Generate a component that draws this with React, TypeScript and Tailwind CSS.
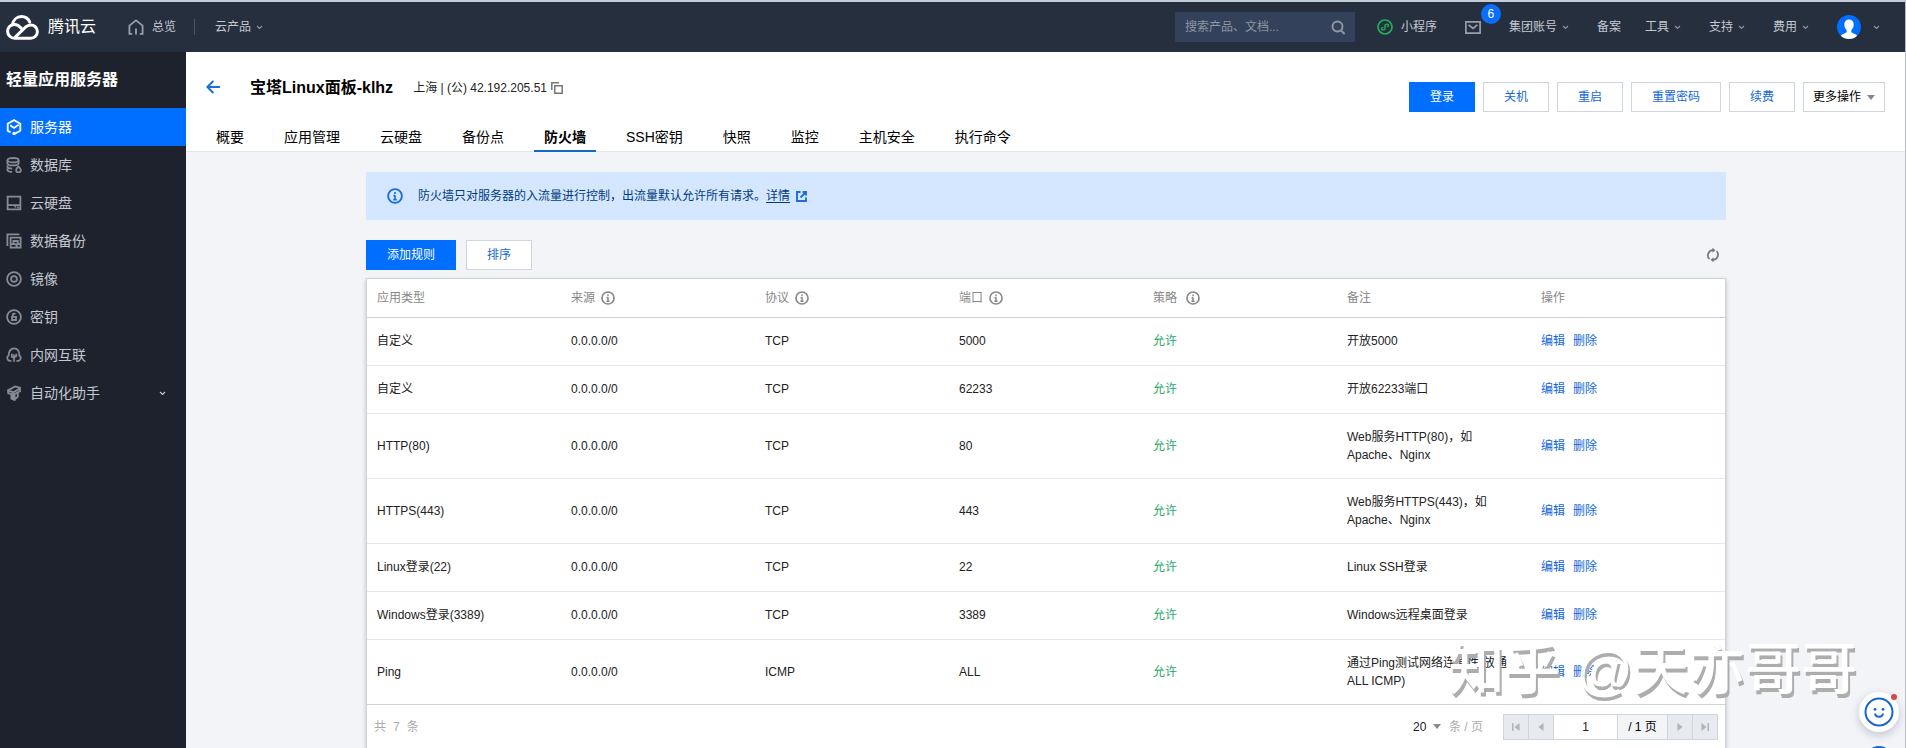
import React, { useState } from 'react';

type IconProps = { className?: string };

const Chevron = ({ className = '' }: IconProps) => (
  <svg viewBox="0 0 7 5" className={'w-[7px] h-[5px] shrink-0 ' + className} fill="none" stroke="currentColor" strokeWidth="1.2">
    <path d="M1 1l2.5 2.4L6 1" />
  </svg>
);

const Caret = ({ className = '' }: IconProps) => (
  <svg viewBox="0 0 8 5" className={'w-2 h-[5px] shrink-0 ' + className} fill="#888">
    <path d="M0 0h8L4 5z" />
  </svg>
);

const InfoIcon = ({ className = '' }: IconProps) => (
  <svg viewBox="0 0 16 16" className={'shrink-0 ' + className} fill="none" stroke="currentColor">
    <circle cx="8" cy="8" r="6.9" strokeWidth="1.9" />
    <path d="M8 4v2M8 7.2V12M6.4 7.7H8M6.2 11.6h3.6" strokeWidth="1.7" />
  </svg>
);

const Logo = () => (
  <svg viewBox="0 0 33 25" className="w-[33px] h-[25px]" fill="none" stroke="#fff" strokeWidth="3" strokeLinecap="round" strokeLinejoin="round">
    <path d="M6.6 9.3C7.4 4.8 11 1.6 15.4 1.6c3.8 0 6.9 2.2 8.3 5.5" />
    <path d="M15.2 13.2C13.2 10.7 11 9.3 8.2 9.4 4.4 9.5 1.6 12.7 1.6 16.3c0 3.9 3.2 6.9 7 6.9h16.2c3.7 0 6.6-3 6.6-6.6 0-3.8-3-6.7-6.7-6.7-2.3 0-3.8.9-5.2 2.2L9.5 21.8" />
  </svg>
);

const icons: Record<string, React.ReactNode> = {
  server: (
    <>
      <path d="M4.600 13.400L1.700 11.700V4.700L8 1.100l6.300 3.600v7L8 15.100" />
      <path d="M4.200 6.300L8 8.900l4.600-3.200" />
      <circle cx="8" cy="14.500" r=".8" />
    </>
  ),
  database: (
    <>
      <ellipse cx="7" cy="3.200" rx="5.600" ry="2.200" />
      <path d="M1.400 3.200v3c0 1.200 2.500 2.200 5.600 2.200s5.600-1 5.600-2.200v-3M1.400 8.500v1c0 1.200 1.800 2 4.800 2.100M1.400 11.500v1.200c0 1.200 1.800 2.100 4.800 2.200" />
      <path d="M12.400 9.500c1.500 1.500 2.500 2.400 2.500 3.500a2.300 2.300 0 0 1-4.800 0c0-1.100.9-2 2.300-3.500z" />
    </>
  ),
  disk: (
    <>
      <path d="M1.600 1.600h12.800v12.800H1.600zM1.600 10.200h12.800" />
      <path d="M9.400 10.200v2.400M11.200 12.400h1.600" />
    </>
  ),
  backup: (
    <>
      <path d="M1.400 13V1.400h12" />
      <path d="M4.600 4.600h10v10h-10zM4.600 11.200h10M7.400 11V8h4.400v3M9.500 12.900h2.200" />
    </>
  ),
  image: (
    <>
      <circle cx="8" cy="8" r="6.900" />
      <circle cx="8" cy="8" r="2.900" />
    </>
  ),
  key: (
    <>
      <circle cx="8" cy="8" r="6.900" />
      <path d="M6.800 7.200V5.400a1.300 1.300 0 0 1 2.400 0M6 7.800h4v3.200H6z" />
    </>
  ),
  network: (
    <>
      <path d="M5.400 13.900H3.800a2.900 2.900 0 0 1-1.200-5.300C2.600 4.400 4.600 1.300 8 1.300s5.400 3.100 5.400 7.300a2.900 2.900 0 0 1-1.200 5.300h-1.800" />
      <path d="M8 14.800V7.400M5.900 6.800v3l2 .9M10.200 6.800v2.400l-2 1" />
    </>
  ),
  robot: (
    <>
      <path d="M2 5.400l7-3.900 5 1.300v3.400L7.600 9.600 2.200 8.200z" />
      <path d="M2.600 5.800l4.800 1.400 6.400-3.600M5.400 9.400v4.200l3.200 1.400V9.400M8.600 14.600l3.200-3V7.800M7.200 7.400v6" />
    </>
  )
};

const menu = [
  { key: 'server', label: '服务器' },
  { key: 'database', label: '数据库' },
  { key: 'disk', label: '云硬盘' },
  { key: 'backup', label: '数据备份' },
  { key: 'image', label: '镜像' },
  { key: 'key', label: '密钥' },
  { key: 'network', label: '内网互联' },
  { key: 'robot', label: '自动化助手', more: true }
];

const tabs = ['概要', '应用管理', '云硬盘', '备份点', '防火墙', 'SSH密钥', '快照', '监控', '主机安全', '执行命令'];

const columns = [
  { label: '应用类型' },
  { label: '来源', info: true },
  { label: '协议', info: true },
  { label: '端口', info: true },
  { label: '策略 ', info: true },
  { label: '备注' },
  { label: '操作' }
];

const rules = [
  { type: '自定义', protocol: 'TCP', port: '5000', remark: '开放5000' },
  { type: '自定义', protocol: 'TCP', port: '62233', remark: '开放62233端口' },
  { type: 'HTTP(80)', protocol: 'TCP', port: '80', remark: 'Web服务HTTP(80)\uff0c如\nApache、Nginx', tall: true },
  { type: 'HTTPS(443)', protocol: 'TCP', port: '443', remark: 'Web服务HTTPS(443)\uff0c如\nApache、Nginx', tall: true },
  { type: 'Linux登录(22)', protocol: 'TCP', port: '22', remark: 'Linux SSH登录' },
  { type: 'Windows登录(3389)', protocol: 'TCP', port: '3389', remark: 'Windows远程桌面登录' },
  { type: 'Ping', protocol: 'ICMP', port: 'ALL', remark: '通过Ping测试网络连通性(放通\nALL ICMP)', tall: true }
];

const TopBar = () => (
  <header className="flex items-center h-[52px] border-t-2 border-[#c3cdd8] bg-[#262f3e] text-[12px] text-[#c4c9d1]">
    <a href="#" className="flex items-center ml-1.5 text-white" aria-label="腾讯云">
      <Logo />
      <span className="ml-[9px] text-[16px]">腾讯云</span>
    </a>
    <a href="#" className="flex items-center gap-2 ml-8">
      <svg viewBox="0 0 16 16" className="w-4 h-4" fill="none" stroke="#98a0ab" strokeWidth="1.8">
        <path d="M4.200 14.800H1.400V6.600L8 1.400l6.600 5.200v8.200h-2.800M8 9.400v6" />
      </svg>
      总览
    </a>
    <span className="w-px h-4 ml-[18px] bg-[#4b5462]"></span>
    <button className="flex items-center gap-[5px] ml-5">
      云产品
      <Chevron className="text-[#8b93a0]" />
    </button>
    <div className="flex items-center ml-auto mr-[26px]">
      <form className="flex items-center w-[180px] h-[30px] pl-2.5 pr-[9px] bg-[#34415a]" onSubmit={e => e.preventDefault()}>
        <input type="text" aria-label="搜索" placeholder="搜索产品、文档..." className="flex-1 min-w-0 bg-transparent outline-none placeholder:text-[#8e96a3]" />
        <button type="submit" aria-label="搜索">
          <svg viewBox="0 0 15 15" className="w-[15px] h-[15px]" fill="none" stroke="#9299a5" strokeWidth="1.9">
            <circle cx="6.500" cy="6.500" r="5" />
            <path d="M10 10.300l3.600 3.700" />
          </svg>
        </button>
      </form>
      <a href="#" className="flex items-center gap-2 ml-[22px]">
        <svg viewBox="0 0 16 16" className="w-4 h-4" fill="none" stroke="#1fae5c">
          <circle cx="8" cy="8" r="7" strokeWidth="1.700" />
          <path d="M6.400 8.400c-1.400 0-2 .8-1.900 1.600.2 1.300 3.300 1.300 3.500-.4V6.400c.1-1.700 3.300-1.700 3.500-.3.100.8-.6 1.500-1.800 1.500" strokeWidth="1.400" />
        </svg>
        小程序
      </a>
      <button className="relative ml-7" aria-label="6">
        <svg viewBox="0 0 16 13" className="w-4 h-[13px]" fill="none" stroke="#98a0ab" strokeWidth="1.700">
          <path d="M.9.9h14.200v11.200H.9zM3.600 3.800L8 7.400l4.400-3.600" />
        </svg>
        <span className="absolute left-4 -top-[17px] flex items-center justify-center w-5 h-5 rounded-full bg-[#0a6eff] text-white">6</span>
      </button>
      <button className="flex items-center gap-[5px] ml-7">集团账号<Chevron className="text-[#8b93a0]" /></button>
      <a href="#" className="ml-7">备案</a>
      <button className="flex items-center gap-[5px] ml-6">工具<Chevron className="text-[#8b93a0]" /></button>
      <button className="flex items-center gap-[5px] ml-7">支持<Chevron className="text-[#8b93a0]" /></button>
      <button className="flex items-center gap-[5px] ml-7">费用<Chevron className="text-[#8b93a0]" /></button>
      <button className="flex items-center gap-3 ml-7" aria-label="账号">
        <svg viewBox="0 0 24 24" className="w-6 h-6">
          <circle cx="12" cy="12" r="12" fill="#006eff" />
          <path d="M12 4.600c-3 0-4.700 2.200-4.700 5 0 2.200 1 4.400 2.400 5.600v1.600c0 1.200-3.800 1.800-5.900 4A12 12 0 0 0 12 24a12 12 0 0 0 8.200-3.200c-2.100-2.200-5.900-2.800-5.900-4v-1.600c1.400-1.200 2.400-3.400 2.400-5.600 0-2.800-1.700-5-4.700-5z" fill="#fff" />
        </svg>
        <Chevron className="text-[#8b93a0]" />
      </button>
    </div>
  </header>
);

const Sidebar = () => (
  <aside className="w-[186px] shrink-0 bg-[#1e222d] text-[#c3c7ce]">
    <h2 className="flex items-center h-14 px-1.5 text-[16px] font-bold text-white">轻量应用服务器</h2>
    <nav>
      {menu.map((item, i) => (
        <a
          key={item.key}
          href="#"
          className={'flex items-center h-[38px] pl-1.5 pr-5 text-[14px] ' + (i === 0 ? 'bg-[#006eff] text-white' : '')}
        >
          <svg viewBox="0 0 16 16" className={'w-4 h-4 mr-2 ' + (i === 0 ? 'text-white' : 'text-[#868c97]')} fill="none" stroke="currentColor" strokeWidth="1.800">
            {icons[item.key]}
          </svg>
          {item.label}
          {item.more && <Chevron className="ml-auto" />}
        </a>
      ))}
    </nav>
  </aside>
);

const outlineBtn = 'h-[30px] border border-[#cfd5de] bg-white text-[#1467d6] text-[12px] ';

const PageHeader = ({ tab, setTab }: { tab: string; setTab: (t: string) => void }) => (
  <div className="h-[100px] border-b border-[#e3e6eb] bg-white">
    <div className="flex items-start h-[70px] pl-5 pr-[21px]">
      <a href="#" className="mt-7" aria-label="返回">
        <svg viewBox="0 0 14 14" className="w-[14px] h-[14px]" fill="none" stroke="#1a6fdc" strokeWidth="2">
          <path d="M14 7H1.600M7.400 1L1.400 7l6 6" />
        </svg>
      </a>
      <h1 className="ml-[30px] mt-6 text-[16px] leading-6 font-bold text-black">宝塔Linux面板-klhz</h1>
      <p className="flex items-center ml-5 mt-6 h-6 text-[12px] text-[#222]">
        上海 | (公) 42.192.205.51
        <button className="ml-1" aria-label="复制">
          <svg viewBox="0 0 12 12" className="w-3 h-3" fill="none" stroke="#777" strokeWidth="1.500">
            <path d="M.8 8V.8H8M3.800 3.800h7.400v7.400H3.800z" />
          </svg>
        </button>
      </p>
      <div className="flex gap-2 ml-auto mt-[30px]">
        <button className="w-[66px] h-[30px] bg-[#006eff] text-white text-[12px]">登录</button>
        <button className={outlineBtn + 'w-[66px]'}>关机</button>
        <button className={outlineBtn + 'w-[66px]'}>重启</button>
        <button className={outlineBtn + 'w-[90px]'}>重置密码</button>
        <button className={outlineBtn + 'w-[66px]'}>续费</button>
        <button className="flex items-center justify-center gap-1.5 w-[82px] h-[30px] border border-[#cfd5de] text-[12px] text-black">
          更多操作
          <Caret />
        </button>
      </div>
    </div>
    <div className="flex gap-5 pl-5" role="tablist">
      {tabs.map(t => (
        <button
          key={t}
          role="tab"
          aria-selected={t === tab}
          onClick={() => setTab(t)}
          className={'h-[30px] px-2.5 pt-0.5 text-[14px] text-black border-b-2 ' + (t === tab ? 'border-[#1768c4] font-bold' : 'border-transparent')}
        >
          {t}
        </button>
      ))}
    </div>
  </div>
);

const RuleTable = () => (
  <table className="w-full table-fixed border-collapse text-[12px] leading-[18px] text-[#222]">
    <thead>
      <tr className="h-[38px] border-b border-[#cfd2d8]">
        {columns.map(c => (
          <th key={c.label} className="px-2.5 text-left font-normal text-[#888]">
            <span className="flex items-center gap-1.5 whitespace-pre">
              {c.label}
              {c.info && <InfoIcon className="w-3.5 h-3.5" />}
            </span>
          </th>
        ))}
      </tr>
    </thead>
    <tbody>
      {rules.map((r, i) => (
        <tr key={i} className={'border-b border-[#e5e7ea] last:border-[#cfd2d8] ' + (r.tall ? 'h-[65px]' : 'h-12')}>
          <td className="px-2.5">{r.type}</td>
          <td className="px-2.5">0.0.0.0/0</td>
          <td className="px-2.5">{r.protocol}</td>
          <td className="px-2.5">{r.port}</td>
          <td className="px-2.5 text-[#29a867]">允许</td>
          <td className="px-2.5 whitespace-pre-line">{r.remark}</td>
          <td className="px-2.5 text-[#1467d6]">
            <div className="flex gap-2">
              <a href="#">编辑</a>
              <a href="#">删除</a>
            </div>
          </td>
        </tr>
      ))}
    </tbody>
  </table>
);

const Pager = () => {
  const [page, setPage] = useState('1');
  const cell = 'flex items-center justify-center w-[25px] border-r border-[#cfd5de] bg-[#e7eaef] ';
  return (
    <div className="flex items-center h-11 px-[7px] text-[12px]">
      <span className="flex gap-[7px] text-[#aaa]"><span>共</span><span>7</span><span>条</span></span>
      <div className="relative flex items-center ml-auto">
        <select aria-label="每页条数" defaultValue="20" className="w-7 appearance-none bg-transparent text-[#222]">
          <option>10</option>
          <option>20</option>
          <option>50</option>
        </select>
        <Caret className="absolute right-0 pointer-events-none" />
      </div>
      <span className="ml-2 text-[#aaa]">条 / 页</span>
      <div className="flex h-[26px] ml-5 border border-r-0 border-[#cfd5de] text-[#b0b4bb]">
        <button className={cell} aria-label="首页" disabled>
          <svg viewBox="0 0 8 8" className="w-2 h-2" fill="currentColor"><path d="M0 0h1.500v8H0zM7.500 0v8L2.500 4z" /></svg>
        </button>
        <button className={cell} aria-label="上一页" disabled>
          <svg viewBox="0 0 8 8" className="w-2 h-2" fill="currentColor"><path d="M6.500 0v8l-5-4z" /></svg>
        </button>
        <input aria-label="页码" value={page} onChange={e => setPage(e.target.value)} className="w-16 bg-white border-r border-[#cfd5de] text-center text-[#222]" />
        <span className="flex items-center justify-center w-[50px] border-r border-[#cfd5de] bg-[#f3f4f7] text-black">/ 1 页</span>
        <button className={cell} aria-label="下一页" disabled>
          <svg viewBox="0 0 8 8" className="w-2 h-2" fill="currentColor"><path d="M1.500 0v8l5-4z" /></svg>
        </button>
        <button className={cell} aria-label="末页" disabled>
          <svg viewBox="0 0 8 8" className="w-2 h-2" fill="currentColor"><path d="M6.500 0H8v8H6.500zM.5 0v8l5-4z" /></svg>
        </button>
      </div>
    </div>
  );
};

const App = () => {
  const [tab, setTab] = useState('防火墙');
  return (
    <div className="relative flex flex-col min-h-screen bg-[#f2f4f8] font-['Liberation_Sans','Noto_Sans_CJK_SC',sans-serif]">
      <TopBar />
      <div className="flex flex-1">
        <Sidebar />
        <main className="flex-1 min-w-0">
          <PageHeader tab={tab} setTab={setTab} />
          <div className="max-w-[1360px] mx-auto pt-5">
            <div className="flex items-center h-12 pl-[21px] bg-[#d5e7ff] text-[12px] text-[#003b80]">
              <InfoIcon className="w-4 h-4 text-[#1a6fdc]" />
              <p className="ml-[15px]">
                防火墙只对服务器的入流量进行控制{'\uff0c'}出流量默认允许所有请求。<a href="#" className="underline underline-offset-2">详情</a>
              </p>
              <svg viewBox="0 0 11 11" className="w-[11px] h-[11px] ml-1.5" fill="none" stroke="#1a6fdc" strokeWidth="1.900">
                <path d="M4.500 1H1v9h9V6.500M6.500 1H10v3.500M10 1L4.500 6.500" />
              </svg>
            </div>
            <div className="flex items-center gap-2.5 mt-5 mb-2">
              <button className="w-[90px] h-[30px] bg-[#006eff] text-white text-[12px]">添加规则</button>
              <button className={outlineBtn + 'w-[66px]'}>排序</button>
              <button className="ml-auto mr-1.5" aria-label="刷新">
                <svg viewBox="0 0 14 14" className="w-3.5 h-3.5" fill="none" stroke="#777" strokeWidth="1.700">
                  <path d="M3.400 11A5.200 5.200 0 0 1 7 2.200M10.600 3A5.200 5.200 0 0 1 7 11.800" />
                  <path d="M6.500-.4L9.400 2.200 6.500 4.800zM7.500 9.200L4.600 11.800l2.900 2.600z" fill="#777" stroke="none" />
                </svg>
              </button>
            </div>
            <div className="border border-b-0 border-[#cfd2d8] bg-white shadow-[0_2px_4px_rgba(54,58,80,0.3)]">
              <RuleTable />
              <Pager />
            </div>
          </div>
        </main>
      </div>

      <div className="fixed right-[49px] bottom-[38px] pointer-events-none text-[56px] leading-[80px] font-medium text-white whitespace-pre [text-shadow:2px_4px_0_#adadad]">
        知乎 @天亦哥哥
      </div>

      <button className="fixed right-[7px] bottom-4 flex items-center justify-center w-10 h-10 rounded-full bg-white shadow-[0_3px_8px_rgba(54,58,80,0.25)]" aria-label="在线客服">
        <svg viewBox="0 0 30 30" className="w-[30px] h-[30px]" fill="none" stroke="#1567cf" strokeWidth="2">
          <circle cx="15" cy="15" r="13.500" />
          <path d="M11 16.500c.5 4.400 7.500 4.400 8 0" />
          <circle cx="11" cy="12.300" r="1.400" fill="#1567cf" stroke="none" />
          <circle cx="19" cy="12.300" r="1.400" fill="#1567cf" stroke="none" />
        </svg>
        <span className="absolute right-0.5 top-0.5 w-1.5 h-1.5 rounded-full bg-[#d9474c]"></span>
      </button>
      <span className="fixed right-[13px] -bottom-[26px] w-7 h-7 rounded-full border-2 border-[#1567cf]"></span>
      <span className="fixed right-0 top-0 w-px h-full bg-[#b9bdc6]"></span>
    </div>
  );
};

export default App;
